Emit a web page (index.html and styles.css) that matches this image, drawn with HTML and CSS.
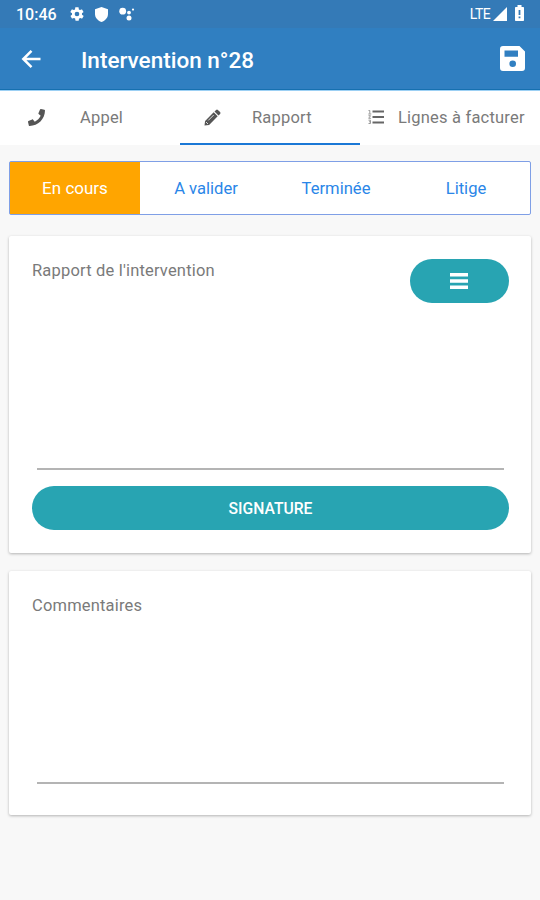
FILE: index.html
```html
<!DOCTYPE html>
<html lang="fr">
<head>
    <meta charset="UTF-8">
    <meta name="viewport" content="width=device-width, initial-scale=1.0">
    <title>Intervention n°28</title>
    <link rel="stylesheet" href="styles.css">
</head>
<body>
    <div class="statusbar">
        <span class="time">10:46</span>
        <svg class="gear" width="16" height="16" viewBox="0 0 24 24"><path fill="#fff" fill-rule="evenodd" d="M19.4 13c.1-.3.1-.6.1-1s0-.7-.1-1l2.1-1.600c.2-.2.3-.4.1-.6l-2-3.500c-.1-.2-.4-.3-.6-.2l-2.500 1c-.5-.4-1.100-.7-1.700-1l-.4-2.600c0-.3-.2-.5-.5-.5h-4c-.2 0-.4.200-.5.400l-.4 2.700c-.6.200-1.100.600-1.700 1l-2.500-1c-.2-.1-.5 0-.6.200l-2 3.500c-.1.200-.1.400.1.600L4.600 11c-.1.300-.1.700-.1 1s0 .7.100 1l-2.100 1.600c-.2.200-.2.400-.1.600l2 3.500c.1.200.4.300.6.200l2.500-1c.5.400 1.100.7 1.700 1l.4 2.600c0 .3.200.5.500.5h4c.3 0 .5-.2.500-.4l.4-2.700c.6-.2 1.100-.6 1.700-1l2.500 1c.2.100.5 0 .6-.2l2-3.500c.1-.2.100-.5-.1-.6zM12 15.500a3.500 3.500 0 1 1 0-7 3.500 3.500 0 0 1 0 7z"/></svg>
        <svg class="shield" width="13" height="15" viewBox="0 0 13 15"><path fill="#fff" d="M6.500 0 13 2.300V7c0 3.800-2.600 6.500-6.500 8C2.600 13.500 0 10.800 0 7V2.300z"/></svg>
        <svg class="dots" width="16" height="14" viewBox="0 0 16 14" fill="#fff"><circle cx="3.700" cy="4.200" r="3.400"/><circle cx="10" cy="5.600" r="1.900"/><circle cx="10" cy="11" r="2.500"/><circle cx="14" cy="2.600" r="1.100"/></svg>
        <span class="network">LTE</span>
        <svg class="signal" width="14" height="14" viewBox="0 0 14 14"><path fill="#fff" d="M14 0v14H0z"/></svg>
        <svg class="battery" width="9" height="16" viewBox="0 0 9 16"><path fill="#fff" d="M2.500 0h4v2H8c.6 0 1 .4 1 1v12c0 .6-.4 1-1 1H1c-.6 0-1-.4-1-1V3c0-.6.4-1 1-1h1.500z"/><path fill="#347ab7" d="M3.600 5h1.800v5H3.600zM3.600 11.500h1.800v1.700H3.600z"/></svg>
    </div>

    <header class="header">
        <svg class="back" width="20" height="20" viewBox="0 0 20 20"><path fill="none" stroke="#fff" stroke-width="2.500" d="M19.500 10H2.500M10.500 1.800 2.300 10l8.200 8.200"/></svg>
        <h1>Intervention n°28</h1>
        <svg class="save" width="25" height="25" viewBox="0 0 25 25"><path fill="#fff" fill-rule="evenodd" d="M3 0h16.500L25 5.500V22a3 3 0 0 1-3 3H3a3 3 0 0 1-3-3V3a3 3 0 0 1 3-3zM4.500 4.500v6.300h13.500V4.500zM12.700 14.500a3.300 3.300 0 1 0 0 6.600 3.300 3.300 0 0 0 0-6.600z"/></svg>
    </header>

    <nav class="tabs">
        <a class="tab tab-call">
            <svg width="17" height="17" viewBox="0 0 512 512"><path fill="#555" d="M493 24.600 389 .6c-11-2.600-22 3.200-27 13.600l-48 112c-4 10-1 21 7 28l61 50c-36 77-99 140-178 178l-50-61c-7-8-18-11-28-7l-112 48C3.900 367-2 379 .6 390l24 104c3 10 12 18 23 18 256 0 464-207 464-464 0-11-8-21-18.600-23.400z"/></svg>
            <span>Appel</span>
        </a>
        <a class="tab tab-report active">
            <svg width="17" height="17" viewBox="0 0 17 17"><path fill="#555" d="M12.100.900a1.300 1.300 0 0 1 1.800 0L16.100 3.100a1.300 1.300 0 0 1 0 1.800l-1.600 1.600-4-4zM9.700 3.300l4 4-8.600 8.600L.5 16.600l.6-4.700z"/><path stroke="#fff" stroke-width=".8" d="m4.300 11.400 5.400-5.400M2 13l2 2"/></svg>
            <span>Rapport</span>
        </a>
        <a class="tab tab-lines">
            <svg width="16" height="14" viewBox="0 0 16 14"><path fill="#666" d="M4.500.500H16v2H4.500zM4.500 6H16v2H4.500zM4.500 11.500H16v2H4.500z"/><path fill="none" stroke="#999" d="M.5.500h1.300v3.300M.3 4h3M.5 5.700h2L.7 8.300h2.200M.5 10.200h2v3.300h-2M1 11.800h1.500"/></svg>
            <span>Lignes à facturer</span>
        </a>
    </nav>

    <main>
        <div class="segments">
            <button class="segment selected">En cours</button>
            <button class="segment">A valider</button>
            <button class="segment">Terminée</button>
            <button class="segment">Litige</button>
        </div>

        <section class="card report">
            <div class="card-top">
                <label for="rapport">Rapport de l'intervention</label>
                <button class="pill menu" aria-label="Menu">
                    <svg width="18" height="16" viewBox="0 0 18 16"><path fill="#fff" d="M0 0h18v3.500H0zM0 6.300h18v3.400H0zM0 12.500h18V16H0z"/></svg>
                </button>
            </div>
            <textarea id="rapport"></textarea>
            <button class="pill signature">SIGNATURE</button>
        </section>

        <section class="card comments">
            <label for="commentaires">Commentaires</label>
            <textarea id="commentaires"></textarea>
        </section>
    </main>
</body>
</html>
```
FILE: styles.css
```css
* {
    box-sizing: border-box;
}
body {
    margin: 0;
    height: 900px;
    background-color: #f8f8f8;
    font-family: Roboto, sans-serif;
    font-size: 16.5px;
    color: #7a7a7a;
    overflow: hidden;
}
svg {
    display: block;
    flex: none;
}
button {
    font-family: inherit;
    border: none;
    padding: 0;
    cursor: pointer;
}
.statusbar {
    display: flex;
    align-items: center;
    height: 28px;
    padding: 0 16px;
    background-color: #347ab7;
    color: #fff;
}
.time {
    width: 53px;
    font-size: 16px;
    font-weight: 500;
}
.shield {
    margin-left: 10px;
}
.dots {
    margin-left: 11px;
}
.network {
    margin-left: auto;
    font-size: 14px;
    letter-spacing: -0.6px;
}
.signal {
    margin-left: 3px;
}
.battery {
    margin-left: 8px;
    margin-top: -3px;
}
.header {
    display: flex;
    align-items: center;
    height: 62px;
    padding: 0 15px 0 21px;
    background-color: #307fc1;
    border-bottom: 1px solid #1670b0;
    color: #fff;
}
h1 {
    margin: 3px 0 0 40px;
    font-size: 22.5px;
    font-weight: 500;
}
.save {
    margin-left: auto;
}
.tabs {
    display: grid;
    grid-template-columns: repeat(3, 1fr);
    height: 55px;
    background-color: #fff;
    border-top: 1px solid #9cd0f4;
}
.tab {
    display: flex;
    align-items: center;
    border-bottom: 2px solid transparent;
    letter-spacing: 0.2px;
    white-space: nowrap;
}
.tab.active {
    border-bottom-color: #1b78d6;
}
.tab-call {
    padding-left: 28px;
    gap: 35px;
}
.tab-report {
    padding-left: 24px;
    gap: 31px;
}
.tab-lines {
    padding-left: 8px;
    gap: 14px;
}
main {
    padding: 16px 9px 0;
}
.segments {
    display: grid;
    grid-template-columns: repeat(4, 1fr);
    height: 54px;
    border: 1px solid #7f9fe6;
    border-radius: 2px;
    background-color: #fff;
}
.segment {
    padding-left: 2px;
    background: none;
    color: #2a86e8;
    font-size: 16.6px;
}
.segment.selected {
    padding-left: 0;
    background-color: #ffa500;
    color: #fff;
    font-size: 17px;
}
.card {
    display: flex;
    flex-direction: column;
    padding: 23px 22px 23px 23px;
    background-color: #fff;
    border-radius: 2px;
    box-shadow: 0 1px 3px rgba(0, 0, 0, 0.28);
}
.report {
    height: 317px;
    margin-top: 21px;
}
.comments {
    height: 244px;
    margin-top: 18px;
    padding-bottom: 31px;
}
.card-top {
    display: flex;
    justify-content: space-between;
    height: 44px;
}
label {
    line-height: 24px;
    letter-spacing: 0.18px;
}
textarea {
    flex: 1;
    margin: 0 5px;
    border: none;
    border-bottom: 2px solid #b4b4b4;
    background: none;
    outline: none;
    resize: none;
    font: inherit;
}
.pill {
    height: 44px;
    border-radius: 22px;
    background-color: #28a4b2;
    color: #fff;
}
.menu {
    display: flex;
    align-items: center;
    justify-content: center;
    width: 99px;
    padding-right: 2px;
}
.signature {
    margin-top: 16px;
    font-size: 15.7px;
    font-weight: 500;
}
```
